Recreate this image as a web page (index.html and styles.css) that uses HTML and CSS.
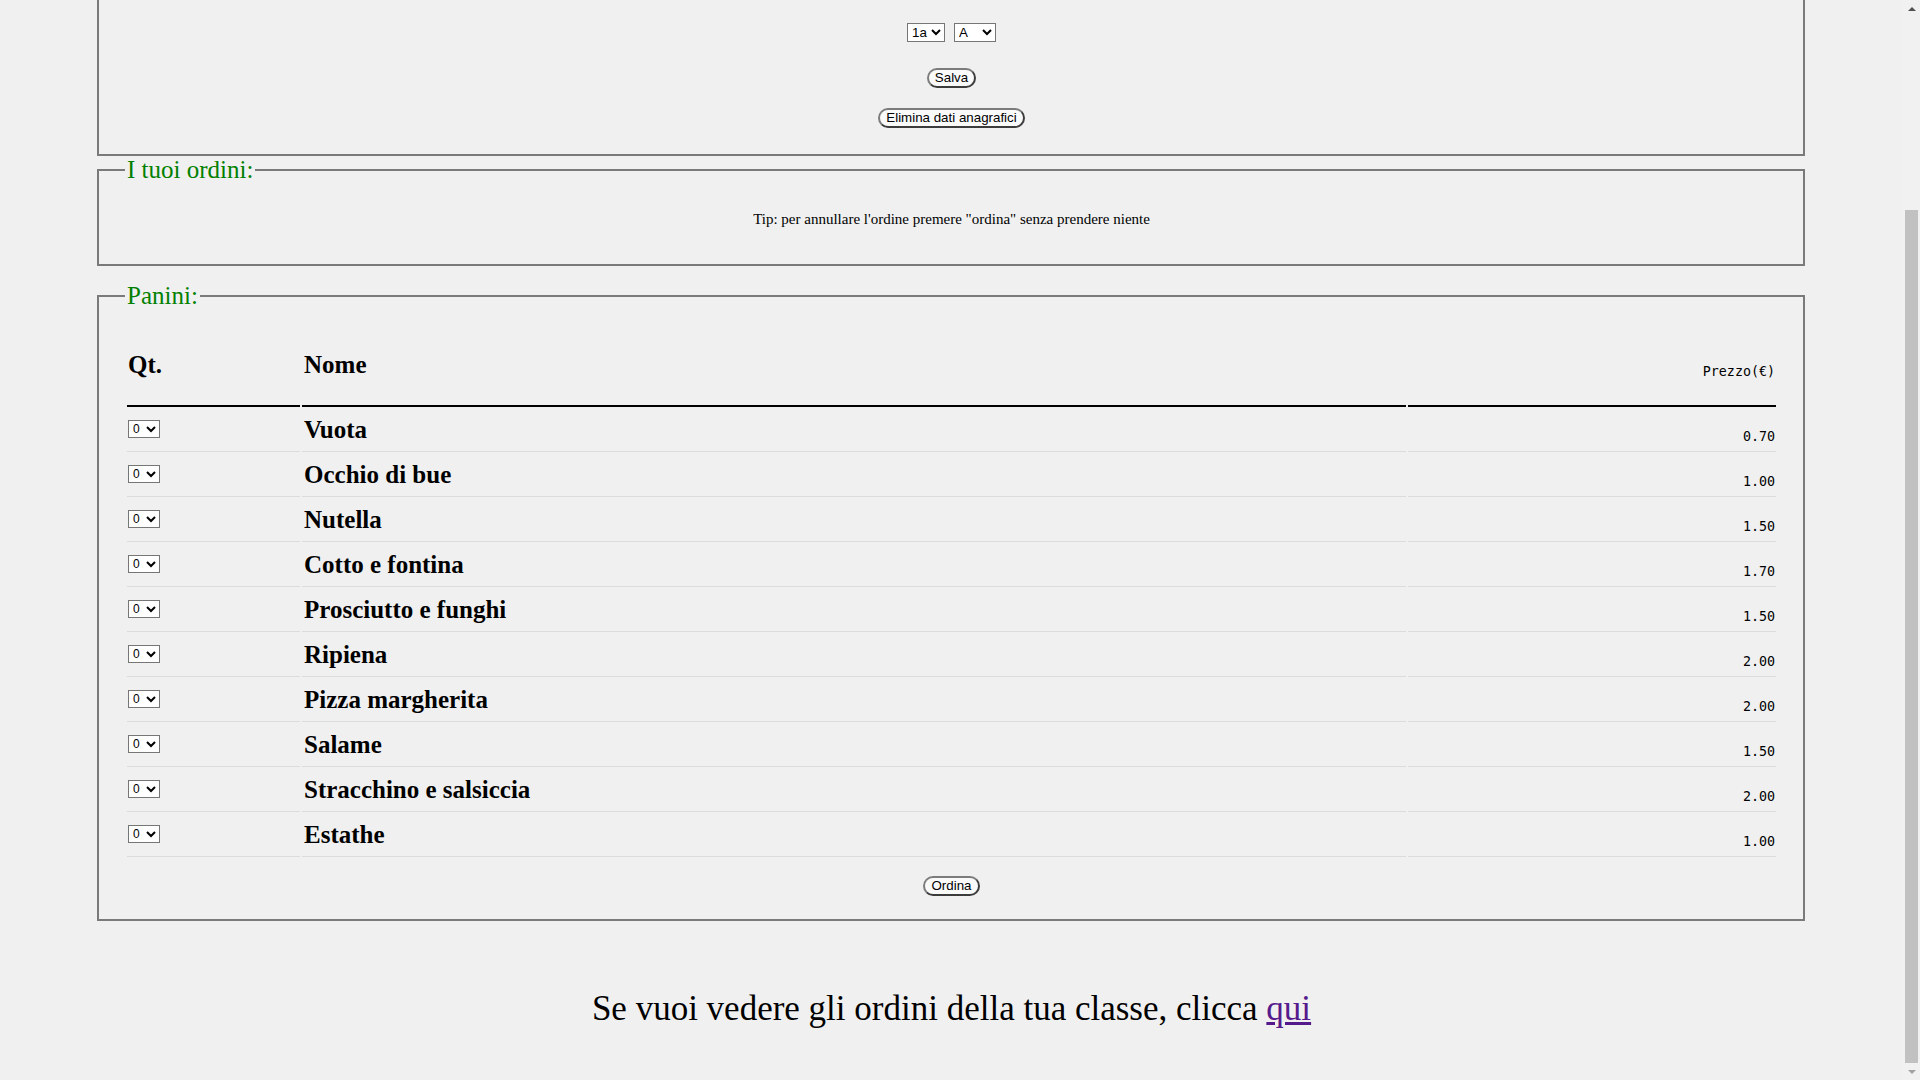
FILE: index.html
```html
<!DOCTYPE html>
<html lang="it">
<head>
<meta charset="utf-8">
<title>Ordina panini</title>
<link rel="stylesheet" href="styles.css">
</head>
<body>
<fieldset class="box box-dati">
  <div class="classe-row">
    <select class="sel sel-anno"><option>1a</option><option>2a</option><option>3a</option><option>4a</option><option>5a</option></select>
    <select class="sel sel-sez"><option>A</option><option>B</option><option>C</option><option>D</option><option>E</option></select>
  </div>
  <div class="btn-row btn-row-salva"><button class="btn" type="button">Salva</button></div>
  <div class="btn-row btn-row-elimina"><button class="btn" type="button">Elimina dati anagrafici</button></div>
</fieldset>
<fieldset class="box box-ordini">
  <legend class="box-title">I tuoi ordini:</legend>
  <p class="tip">Tip: per annullare l'ordine premere "ordina" senza prendere niente</p>
</fieldset>
<fieldset class="box box-panini">
  <legend class="box-title">Panini:</legend>
  <table class="menu">
    <thead>
      <tr><th class="col-qt">Qt.</th><th class="col-nome">Nome</th><th class="col-prezzo">Prezzo(€)</th></tr>
    </thead>
    <tbody>
      <tr><td class="cell-qt"><select class="sel qty"><option>0</option><option>1</option><option>2</option><option>3</option></select></td><td class="cell-nome">Vuota</td><td class="cell-prezzo">0.70</td></tr>
      <tr><td class="cell-qt"><select class="sel qty"><option>0</option><option>1</option><option>2</option><option>3</option></select></td><td class="cell-nome">Occhio di bue</td><td class="cell-prezzo">1.00</td></tr>
      <tr><td class="cell-qt"><select class="sel qty"><option>0</option><option>1</option><option>2</option><option>3</option></select></td><td class="cell-nome">Nutella</td><td class="cell-prezzo">1.50</td></tr>
      <tr><td class="cell-qt"><select class="sel qty"><option>0</option><option>1</option><option>2</option><option>3</option></select></td><td class="cell-nome">Cotto e fontina</td><td class="cell-prezzo">1.70</td></tr>
      <tr><td class="cell-qt"><select class="sel qty"><option>0</option><option>1</option><option>2</option><option>3</option></select></td><td class="cell-nome">Prosciutto e funghi</td><td class="cell-prezzo">1.50</td></tr>
      <tr><td class="cell-qt"><select class="sel qty"><option>0</option><option>1</option><option>2</option><option>3</option></select></td><td class="cell-nome">Ripiena</td><td class="cell-prezzo">2.00</td></tr>
      <tr><td class="cell-qt"><select class="sel qty"><option>0</option><option>1</option><option>2</option><option>3</option></select></td><td class="cell-nome">Pizza margherita</td><td class="cell-prezzo">2.00</td></tr>
      <tr><td class="cell-qt"><select class="sel qty"><option>0</option><option>1</option><option>2</option><option>3</option></select></td><td class="cell-nome">Salame</td><td class="cell-prezzo">1.50</td></tr>
      <tr><td class="cell-qt"><select class="sel qty"><option>0</option><option>1</option><option>2</option><option>3</option></select></td><td class="cell-nome">Stracchino e salsiccia</td><td class="cell-prezzo">2.00</td></tr>
      <tr><td class="cell-qt"><select class="sel qty"><option>0</option><option>1</option><option>2</option><option>3</option></select></td><td class="cell-nome">Estathe</td><td class="cell-prezzo">1.00</td></tr>
    </tbody>
  </table>
  <div class="btn-row btn-row-ordina"><button class="btn" type="button">Ordina</button></div>
</fieldset>
<p class="footer">Se vuoi vedere gli ordini della tua classe, clicca <a href="#" class="link">qui</a></p>
<div class="scrollbar" aria-hidden="true">
  <div class="sb-btn"><span class="sb-arrow-up"></span></div>
  <div class="sb-track"><div class="sb-thumb"></div></div>
  <div class="sb-btn"><span class="sb-arrow-down"></span></div>
</div>
</body>
</html>
```
FILE: styles.css
```css
html {
  background: #f0f0f0;
  overflow: hidden;
}
body {
  margin: 0 25px 0 8px;
  font-family: "Liberation Serif", "Times New Roman", serif;
  color: #000;
}
.box {
  margin: 0 90px 0 89px;
  padding: 0 25px 0 26px;
  border: 2px solid #7a7a7a;
  min-width: 0;
}
.box-title {
  font-size: 25px;
  line-height: 28px;
  color: #008000;
  padding: 0 2px;
}
.box-dati {
  margin-top: -50px;
  padding-top: 71px;
  padding-bottom: 26px;
}
.classe-row {
  display: flex;
  justify-content: center;
  gap: 9px;
  height: 19px;
}
.sel {
  font-family: "Liberation Sans", Arial, sans-serif;
  font-size: 13.33px;
  color: #000;
  background-color: #fff;
  border: 1px solid #767676;
  border-radius: 0;
  margin: 0;
  box-sizing: border-box;
}
.sel-anno {
  width: 38px;
  height: 19px;
}
.sel-sez {
  width: 42px;
  height: 19px;
}
.qty {
  width: 32px;
  height: 18px;
  font-size: 12px;
  display: block;
  margin-top: 11px;
}
.btn-row {
  display: flex;
  justify-content: center;
}
.btn-row-salva {
  margin-top: 26px;
}
.btn-row-elimina {
  margin-top: 20px;
}
.btn {
  font-family: "Liberation Sans", Arial, sans-serif;
  font-size: 13.33px;
  height: 20px;
  padding: 0 6px;
  margin: 0;
  color: #000;
  background: #fafafa;
  border: 2px solid #3c3c3c;
  border-top-color: #7c7c7c;
  border-left-color: #7c7c7c;
  border-radius: 10px;
  box-sizing: border-box;
  line-height: 16px;
}
.box-ordini .tip {
  margin: 27px 0 36px;
  font-size: 15px;
  line-height: 17px;
  text-align: center;
}
.box-panini {
  margin-top: 16px;
  padding-bottom: 23px;
}
.menu {
  width: 100%;
  border-spacing: 2px;
  table-layout: fixed;
}
.menu th,
.menu td {
  padding: 0 1px;
  box-sizing: border-box;
}
.menu th {
  text-align: left;
  vertical-align: top;
  font-size: 25px;
  line-height: 28px;
  font-weight: bold;
  padding-top: 39px;
  padding-bottom: 26px;
  border-bottom: 2px solid #000;
}
.menu th.col-qt {
  width: 173px;
}
.menu th.col-nome {
  padding-left: 2px;
}
.menu th.col-prezzo {
  width: 368px;
  text-align: right;
  font-family: "DejaVu Sans Mono", "Liberation Mono", monospace;
  font-size: 13.33px;
  line-height: 16px;
  font-weight: normal;
  padding-top: 52px;
  padding-bottom: 0;
}
.menu td {
  border-bottom: 1px solid #dcdcdc;
}
.menu td.cell-qt {
  vertical-align: top;
  padding-left: 1px;
}
.menu td.cell-nome {
  vertical-align: top;
  font-size: 25px;
  font-weight: bold;
  line-height: 42px;
  padding-left: 2px;
}
.menu td.cell-prezzo {
  vertical-align: top;
  text-align: right;
  font-family: "DejaVu Sans Mono", "Liberation Mono", monospace;
  font-size: 13.33px;
  line-height: 16px;
  padding-top: 20px;
}
.btn-row-ordina {
  margin-top: 17px;
}
.footer {
  margin: 68px 0 0;
  padding-bottom: 52px;
  font-size: 35px;
  line-height: 39px;
  text-align: center;
}
.link {
  color: #551a8b;
}
.scrollbar {
  position: fixed;
  top: 0;
  right: 0;
  width: 17px;
  height: 100vh;
  background: #f1f1f1;
  display: flex;
  flex-direction: column;
}
.sb-btn {
  height: 17px;
  display: flex;
  align-items: center;
  justify-content: center;
}
.sb-arrow-up {
  width: 0;
  height: 0;
  border-left: 4px solid transparent;
  border-right: 4px solid transparent;
  border-bottom: 4px solid #505050;
}
.sb-arrow-down {
  width: 0;
  height: 0;
  border-left: 4px solid transparent;
  border-right: 4px solid transparent;
  border-top: 4px solid #a3a3a3;
}
.sb-track {
  flex: 1;
  display: flex;
  flex-direction: column;
  justify-content: flex-end;
}
.sb-thumb {
  height: 853px;
  margin: 0 2px;
  background: #c1c1c1;
}
```
